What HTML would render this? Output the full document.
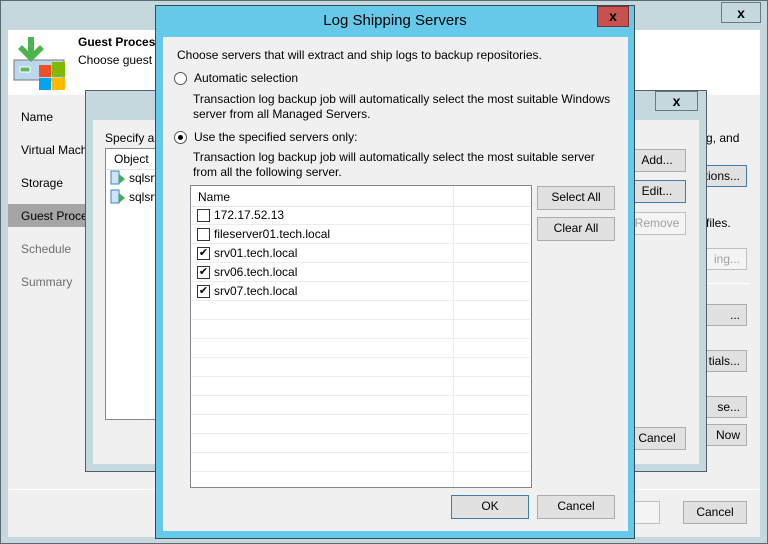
<!DOCTYPE html>
<html><head><meta charset="utf-8"><style>
*{margin:0;padding:0;box-sizing:border-box}
body{width:768px;height:544px;overflow:hidden;font-family:"Liberation Sans",sans-serif;font-size:12px;color:#000;background:#c5d8de;position:relative}
.a{position:absolute}
.t{position:absolute;white-space:nowrap;line-height:14px}
.btn{position:absolute;background:#e1e1e1;border:1px solid #adadad;text-align:center;line-height:20px;white-space:nowrap;overflow:hidden}
.bl{border-color:#3c7fb1}
.dis{background:#f4f4f4;border-color:#bfbfbf;color:#a0a0a0}
.gray{color:#6d6d6d}
.cb{position:absolute;width:13px;height:13px;border:1px solid #333;background:#fff}
.row{position:absolute;left:0;width:339px;height:19px;border-bottom:1px solid #ececec}
</style></head><body>
<!-- outer window -->
<div class="a" style="left:0;top:0;width:768px;height:544px;border:1px solid #5a6a70;background:#c5d8de"></div>
<div class="btn" style="left:721px;top:2px;width:40px;height:21px;background:#c5d8de;border-color:#6a7a80;font-weight:bold;font-size:14px">x</div>
<div class="a" style="left:8px;top:30px;width:752px;height:507px;background:#f0f0f0"></div>
<div class="a" style="left:8px;top:30px;width:752px;height:65px;background:#fff"></div>
<!-- icon -->
<svg class="a" style="left:12px;top:34px" width="56" height="56" viewBox="0 0 56 56">
<rect x="2" y="26" width="50" height="20" fill="#bcd6ee" stroke="#7a7a7a"/>
<rect x="8" y="33" width="10" height="5" fill="#5cb85c" stroke="#fff"/>
<path d="M16 3h6v14l6-6 4 4-13 13-13-13 4-4 6 6z" fill="#4db34d"/>
<rect x="27" y="31" width="12" height="12" fill="#f25022"/>
<rect x="40" y="28" width="13" height="15" fill="#7fba00"/>
<rect x="27" y="44" width="12" height="13" fill="#00a4ef"/>
<rect x="40" y="44" width="13" height="13" fill="#ffb900"/>
</svg>
<div class="t" style="left:78px;top:35px;font-weight:bold">Guest Processing</div>
<div class="t" style="left:78px;top:53px">Choose guest OS</div>
<div class="t" style="left:21px;top:110px">Name</div>
<div class="t" style="left:21px;top:143px">Virtual Machines</div>
<div class="t" style="left:21px;top:176px">Storage</div>
<div class="a" style="left:8px;top:204px;width:78px;height:23px;background:#a5a5a5"></div>
<div class="t" style="left:21px;top:209px">Guest Processing</div>
<div class="t gray" style="left:21px;top:242px">Schedule</div>
<div class="t gray" style="left:21px;top:275px">Summary</div>
<div class="t" style="left:706px;top:131px">g, and</div>
<div class="btn bl" style="left:690px;top:165px;width:57px;height:22px;text-align:right;padding-right:6px">tions...</div>
<div class="t" style="left:706px;top:216px">files.</div>
<div class="btn dis" style="left:690px;top:248px;width:57px;height:22px;text-align:right;padding-right:6px">ing...</div>
<div class="a" style="left:706px;top:283px;width:44px;height:1px;background:#fff"></div>
<div class="btn" style="left:690px;top:304px;width:57px;height:22px;text-align:right;padding-right:6px">...</div>
<div class="btn" style="left:690px;top:350px;width:57px;height:22px;text-align:right;padding-right:6px">tials...</div>
<div class="btn" style="left:690px;top:396px;width:57px;height:22px;text-align:right;padding-right:6px">se...</div>
<div class="btn" style="left:690px;top:424px;width:57px;height:22px;text-align:right;padding-right:6px">Now</div>
<div class="a" style="left:8px;top:489px;width:752px;height:1px;background:#fff"></div>
<div class="btn" style="left:600px;top:501px;width:60px;height:23px;background:#f4f4f4;border-color:#bfbfbf"></div>
<div class="btn" style="left:683px;top:501px;width:64px;height:23px">Cancel</div>
<!-- middle dialog -->
<div class="a" style="left:85px;top:90px;width:622px;height:382px;border:1px solid #50606a;background:#c5d8de"></div>
<div class="btn" style="left:655px;top:91px;width:43px;height:20px;background:#c5d8de;border-color:#6a7a80;font-weight:bold;font-size:14px;line-height:18px">x</div>
<div class="a" style="left:93px;top:120px;width:606px;height:344px;background:#f0f0f0"></div>
<div class="t" style="left:105px;top:131px">Specify application</div>
<div class="a" style="left:105px;top:148px;width:100px;height:272px;background:#fff;border:1px solid #828790"></div>
<div class="t" style="left:114px;top:152px">Object</div>
<div class="a" style="left:106px;top:169px;width:60px;height:1px;background:#e5e5e5"></div>
<svg class="a" style="left:110px;top:170px" width="16" height="16"><rect x="1" y="1" width="8" height="13" fill="#cfe3f3" stroke="#3a87c8"/><path d="M9 4l6 5-6 5z" fill="#3bb34a"/></svg>
<svg class="a" style="left:110px;top:189px" width="16" height="16"><rect x="1" y="1" width="8" height="13" fill="#cfe3f3" stroke="#3a87c8"/><path d="M9 4l6 5-6 5z" fill="#3bb34a"/></svg>
<div class="t" style="left:129px;top:171px">sqlsrv</div>
<div class="t" style="left:129px;top:190px">sqlsrv</div>
<div class="btn" style="left:628px;top:149px;width:58px;height:23px">Add...</div>
<div class="btn bl" style="left:628px;top:180px;width:58px;height:23px">Edit...</div>
<div class="btn dis" style="left:628px;top:212px;width:58px;height:23px">Remove</div>
<div class="btn" style="left:628px;top:427px;width:58px;height:23px">Cancel</div>
<!-- main dialog -->
<div class="a" style="left:155px;top:5px;width:480px;height:534px;background:#66c9ea;border:1px solid #3a4a52"></div>
<div class="t" style="left:155px;top:12px;width:480px;text-align:center;font-size:15px;line-height:18px">Log Shipping Servers</div>
<div class="a" style="left:597px;top:6px;width:32px;height:21px;background:#c75050;border:1px solid #7a3030;color:#000;text-align:center;font-weight:bold;font-size:14px;line-height:18px">x</div>
<div class="a" style="left:163px;top:37px;width:465px;height:494px;background:#f0f0f0"></div>
<div class="t" style="left:177px;top:48px">Choose servers that will extract and ship logs to backup repositories.</div>
<div class="a" style="left:174px;top:72px;width:13px;height:13px;border:1px solid #555;border-radius:50%;background:#fff"></div>
<div class="t" style="left:194px;top:71px">Automatic selection</div>
<div class="t" style="left:193px;top:92px">Transaction log backup job will automatically select the most suitable Windows</div>
<div class="t" style="left:193px;top:107px">server from all Managed Servers.</div>
<div class="a" style="left:174px;top:131px;width:13px;height:13px;border:1px solid #555;border-radius:50%;background:#fff"></div>
<div class="a" style="left:178px;top:135px;width:5px;height:5px;border-radius:50%;background:#000"></div>
<div class="t" style="left:194px;top:130px">Use the specified servers only:</div>
<div class="t" style="left:193px;top:150px">Transaction log backup job will automatically select the most suitable server</div>
<div class="t" style="left:193px;top:165px">from all the following server.</div>
<div class="a" style="left:190px;top:185px;width:342px;height:303px;background:#fff;border:1px solid #828790;overflow:hidden">
<div class="a" style="left:262px;top:0;width:1px;height:303px;background:#ececec"></div>
<div class="row" style="top:0;height:21px;border-bottom:1px solid #e5e5e5"></div>
<div class="t" style="left:7px;top:4px">Name</div>
<div class="row" style="top:20px"></div><div class="row" style="top:39px"></div><div class="row" style="top:58px"></div><div class="row" style="top:77px"></div><div class="row" style="top:96px"></div><div class="row" style="top:115px"></div><div class="row" style="top:134px"></div><div class="row" style="top:153px"></div><div class="row" style="top:172px"></div><div class="row" style="top:191px"></div><div class="row" style="top:210px"></div><div class="row" style="top:229px"></div><div class="row" style="top:248px"></div><div class="row" style="top:267px"></div>
</div>
<div class="cb" style="left:197px;top:209px"></div><div class="t" style="left:214px;top:208px">172.17.52.13</div>
<div class="cb" style="left:197px;top:228px"></div><div class="t" style="left:214px;top:227px">fileserver01.tech.local</div>
<div class="cb" style="left:197px;top:247px;font-size:11px;line-height:11px;text-align:center">✔</div><div class="t" style="left:214px;top:246px">srv01.tech.local</div>
<div class="cb" style="left:197px;top:266px;font-size:11px;line-height:11px;text-align:center">✔</div><div class="t" style="left:214px;top:265px">srv06.tech.local</div>
<div class="cb" style="left:197px;top:285px;font-size:11px;line-height:11px;text-align:center">✔</div><div class="t" style="left:214px;top:284px">srv07.tech.local</div>
<div class="btn" style="left:537px;top:186px;width:78px;height:24px">Select All</div>
<div class="btn" style="left:537px;top:217px;width:78px;height:24px">Clear All</div>
<div class="btn bl" style="left:451px;top:495px;width:78px;height:24px">OK</div>
<div class="btn" style="left:537px;top:495px;width:78px;height:24px">Cancel</div>
</body></html>
